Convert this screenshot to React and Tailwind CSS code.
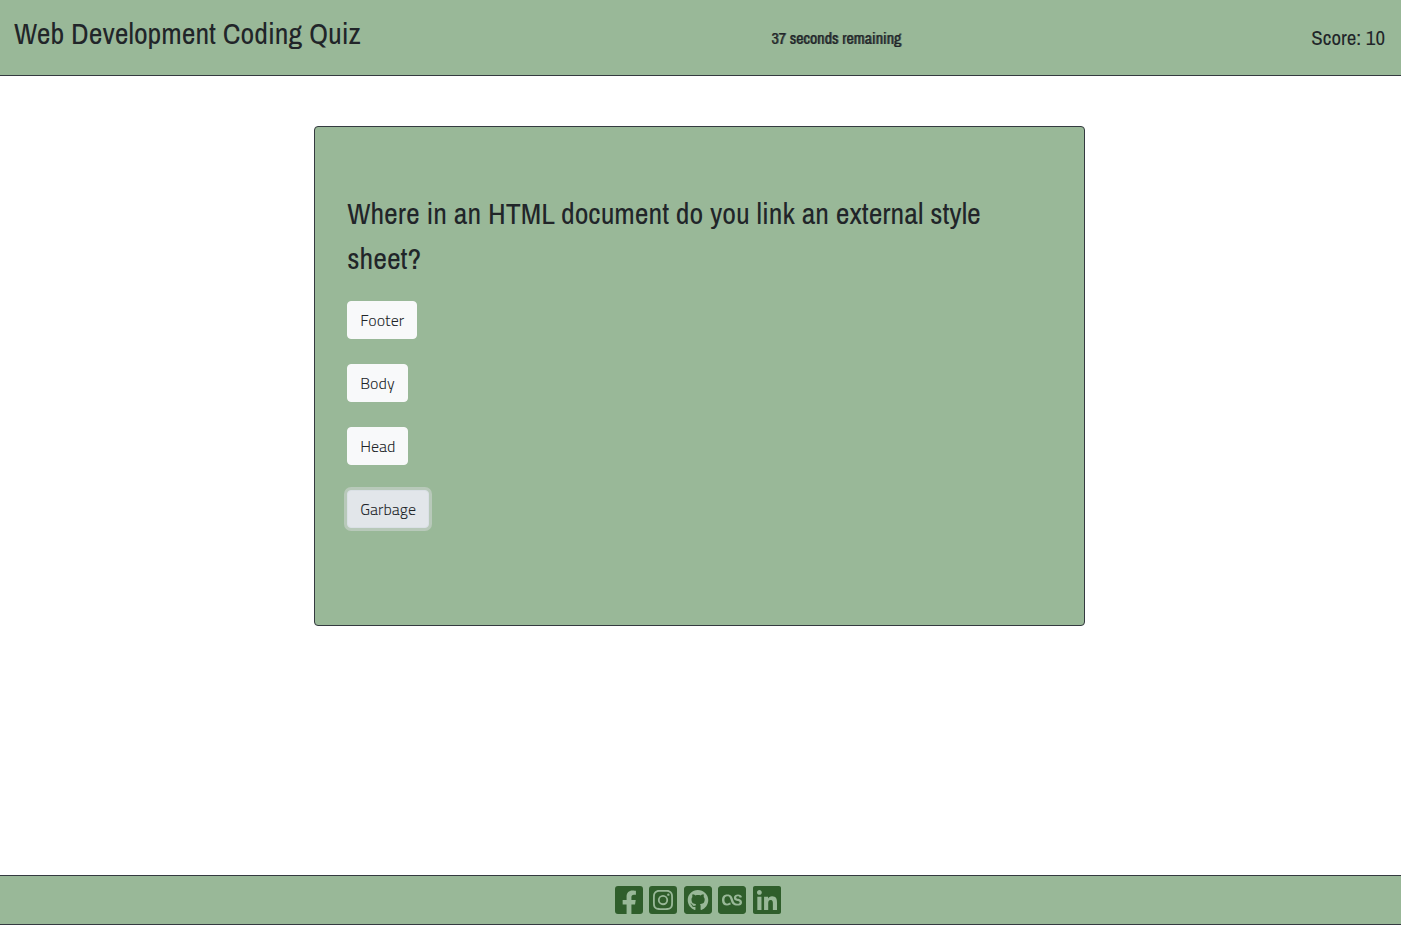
import { useState } from "react";
import {
  FaFacebookSquare,
  FaInstagramSquare,
  FaGithubSquare,
  FaLastfmSquare,
  FaLinkedin,
} from "react-icons/fa";

const answers = ["Footer", "Body", "Head", "Garbage"];

const links = [
  { label: "Facebook", href: "#facebook", Icon: FaFacebookSquare },
  { label: "Instagram", href: "#instagram", Icon: FaInstagramSquare },
  { label: "GitHub", href: "#github", Icon: FaGithubSquare },
  { label: "Last.fm", href: "#lastfm", Icon: FaLastfmSquare },
  { label: "LinkedIn", href: "#linkedin", Icon: FaLinkedin },
];

export default function App() {
  const [selected, setSelected] = useState("Garbage");

  return (
    <div className="flex min-h-screen flex-col bg-white font-['Archivo_Narrow','Liberation_Sans_Narrow','Liberation_Sans',sans-serif] text-[#212529]">
      <header className="flex items-center justify-between border-b border-[#343a40] bg-[#99b898] pt-[15px] pr-4 pb-[15px] pl-[14px]">
        <h1 className="pb-2 text-[30px] leading-[37px]">Web Development Coding Quiz</h1>
        <p className="text-base [text-shadow:1px_0_0_rgb(33_37_41/0.6)]">37 seconds remaining</p>
        <p className="text-[21px]">Score: 10</p>
      </header>

      <main className="flex flex-1 flex-col items-center pt-[50px]">
        <section className="mr-0.5 min-h-[500px] w-[55%] rounded-[4px] border border-[#343a40] bg-[#99b898] px-8 pt-16 pb-16">
          <h2 className="text-[30px] leading-[45px]">
            Where in an HTML document do you link an external style sheet?
          </h2>
          <div className="mt-5 flex flex-col items-start gap-[25px]">
            {answers.map((answer) => (
              <button
                key={answer}
                type="button"
                aria-pressed={selected === answer}
                onClick={() => setSelected(answer)}
                className={
                  "rounded-[4px] border px-3 py-[6px] font-['Titillium_Web','Open_Sans',sans-serif] text-base font-light " +
                  (selected === answer
                    ? "border-[#dae0e5] bg-[#e2e6ea] ring-3 ring-[#d8d9db]/50"
                    : "border-[#f8f9fa] bg-[#f8f9fa]")
                }
              >
                {answer}
              </button>
            ))}
          </div>
        </section>
      </main>

      <footer className="flex justify-center border-y border-[#343a40] bg-[#99b898] py-2 pr-[6px]">
        <nav aria-label="Social links" className="flex w-[166px] justify-between">
          {links.map(({ label, href, Icon }) => (
            <a key={label} href={href} aria-label={label} className="text-[#2f5e2b]">
              <Icon className="h-8 w-7" />
            </a>
          ))}
        </nav>
      </footer>
    </div>
  );
}
